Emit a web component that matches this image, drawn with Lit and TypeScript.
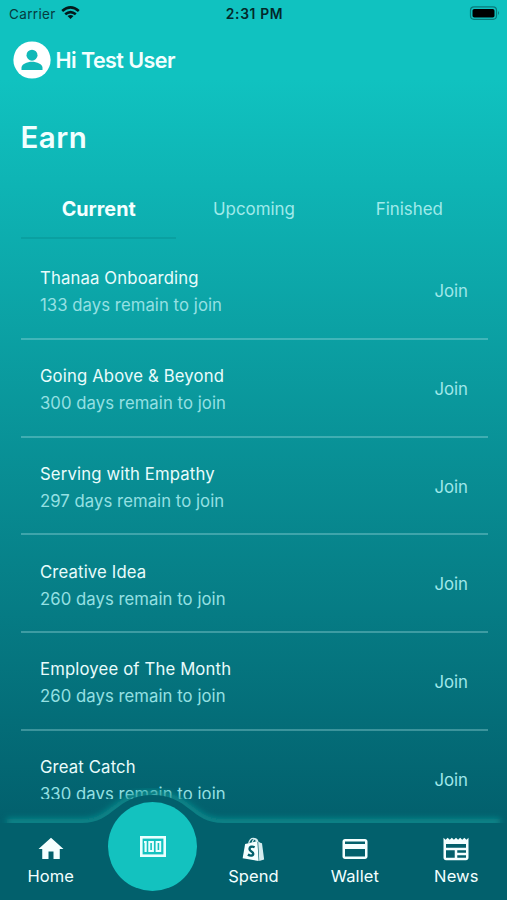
import { LitElement, html, css, svg } from "lit";
import { customElement, state } from "lit/decorators.js";
import { classMap } from "lit/directives/class-map.js";

interface Program { name: string; days: number; }

const programs: Program[] = [
  { name: "Thanaa Onboarding", days: 133 },
  { name: "Going Above & Beyond", days: 300 },
  { name: "Serving with Empathy", days: 297 },
  { name: "Creative Idea", days: 260 },
  { name: "Employee of The Month", days: 260 },
  { name: "Great Catch", days: 330 },
];

const icons = {
  home: svg`<path d="M10 20v-6h4v6h5v-8h3L12 3 2 12h3v8z"/>`,
  spend: svg`<g transform="translate(1.300 1.200)"><path d="M4.400 6.800 14.200 4.600 15.200 20.400 2.400 18.200z"/><path d="m14.800 4.700 2.200 1.300.9.200 1.700 12.900-3.900 1.200z" fill="#d5ecee"/><path d="M7.200 6.600C7.800 3.700 9.400 2.300 10.900 2.300c1.600 0 2.400 1.200 2.500 3M10.100 6c.3-2.200 1.300-3.500 2.700-3.300 1 .2 1.600 1.100 1.700 2.500" fill="none" stroke="#d5ecee" stroke-width="1"/><path d="M12 9.400C9.800 8.300 7.900 9 7.900 10.700c0 2 3 2 3 3.900 0 1.700-2.300 1.900-4.300.7" fill="none" stroke="#02606c" stroke-width="1.900"/></g>`,
  wallet: svg`<path d="M20 4H4c-1.110 0-2 .89-2 2v12c0 1.110.89 2 2 2h16c1.110 0 2-.89 2-2V6c0-1.110-.89-2-2-2zm0 14H4v-6h16v6zm0-10H4V6h16v2z"/>`,
  news: svg`<path fill-rule="evenodd" d="m22 3-1.670 1.670L18.670 3 17 4.670 15.330 3l-1.660 1.670L12 3l-1.670 1.670L8.670 3 7 4.670 5.330 3 3.670 4.670 2 3v16c0 1.100.9 2 2 2h16c1.100 0 2-.9 2-2V3zM11 19H4v-6h7v6zm9 0h-7v-2h7v2zm0-4h-7v-2h7v2zm0-4H4V8h16v3z"/>`,
};

@customElement("status-bar")
class StatusBar extends LitElement {
  static styles = css`
    :host { display: grid; grid-template-columns: 1fr auto 1fr; align-items: center; height: 28px; padding: 0 7px 0 9px; box-sizing: border-box; font-size: 13.500px; color: #063b3e; }
    .left { display: flex; align-items: center; gap: 5px; letter-spacing: 0.350px; }
    .wifi { width: 19px; height: 14px; fill: none; stroke: #04191b; margin-top: -2px; }
    .time { color: #03282a; font-weight: 600; font-size: 13.800px; letter-spacing: 0.650px; }
    .battery { justify-self: end; width: 31px; height: 14px; margin-top: -2px; }
  `;
  render() {
    return html`
      <div class="left"><span>Carrier</span>
        <svg class="wifi" viewBox="0 0 19 14"><path d="M1.200 5Q9.500-2.200 17.800 5M4.200 8.300Q9.500 3.800 14.800 8.300" stroke-width="2.600"/><path d="M9.500 13 6.500 10.100Q9.500 7.800 12.500 10.100z" fill="#04191b" stroke="none"/></svg>
      </div>
      <span class="time">2:31 PM</span>
      <svg class="battery" viewBox="0 0 31 14"><rect x="1.500" y=".9" width="26" height="12.400" rx="3.500" fill="none" stroke="#087b7b" stroke-width="1.200"/><rect x="3.500" y="2.900" width="22" height="8.600" rx="1.800" fill="#000"/><path d="M29 5q2 2 0 4z" fill="#087b7b"/></svg>
    `;
  }
}

@customElement("program-row")
class ProgramRow extends LitElement {
  static properties = { program: { attribute: false } };
  declare program: Program;
  static styles = css`
    :host { display: flex; align-items: center; justify-content: space-between; height: 97.750px; flex: none; box-sizing: border-box; padding: 2px 20px 0 19px; border-bottom: 2px solid rgba(170, 225, 230, 0.340); }
    .text { padding-top: 2.500px; }
    .name { font-size: 16.700px; line-height: 27px; color: #e9fcfc; letter-spacing: 0.150px; }
    .days { font-size: 16.700px; line-height: 27px; color: #95e0e3; letter-spacing: 0.060px; }
    .join { font-size: 16.800px; color: #9fe7e9; }
  `;
  render() {
    return html`
      <div class="text"><div class="name">${this.program.name}</div>
      <div class="days">${this.program.days} days remain to join</div></div>
      <span class="join">Join</span>`;
  }
}

@customElement("tab-bar")
class TabBar extends LitElement {
  static styles = css`
    :host { display: block; position: relative; height: 112px; flex: none; color: #f2ffff; }
    .shape { position: absolute; inset: 0; width: 507px; height: 112px; }
    .items { position: relative; display: grid; grid-template-columns: repeat(5, 1fr); height: 112px; }
    .item { display: flex; flex-direction: column; align-items: center; padding-top: 46px; font-size: 16.500px; line-height: 24px; letter-spacing: 0.100px; }
    .icon { width: 30px; height: 30px; fill: #f4ffff; margin-bottom: -0.500px; }
    .active { justify-self: center; width: 89px; height: 89px; border-radius: 50%; background: #13c2bf; margin-top: 13.500px; display: grid; place-items: center; position: relative; left: 0.500px; }
    .note { width: 26px; height: 21px; }
  `;
  item(label: string, icon: unknown) {
    return html`<div class="item"><svg class="icon" viewBox="0 0 24 24">${icon}</svg><span>${label}</span></div>`;
  }
  render() {
    const edge = "M0 35H82C114 35 116 7 152.500 7S191 35 223 35H507";
    return html`
      <svg class="shape" viewBox="0 0 507 112">
        <defs><filter id="glow" x="-5%" y="-100%" width="110%" height="300%"><feGaussianBlur stdDeviation="3"/></filter></defs>
        <path d="M7 34H82C114 34 116 6 152.500 6S191 34 223 34H500" fill="none" stroke="#0a9292" stroke-width="6" filter="url(#glow)"/>
        <path d="${edge}V112H0z" fill="#02606c"/>
      </svg>
      <div class="items">
        ${this.item("Home", icons.home)}
        <div class="active"><svg class="note" viewBox="0 0 26 21"><rect x="1.300" y="1.300" width="23.400" height="18.400" fill="none" stroke="#eaffff" stroke-width="2.600"/><path d="M5.600 5V16M4 6H6" stroke="#eaffff" stroke-width="2.200"/><rect x="9.300" y="6" width="3.600" height="9" fill="none" stroke="#eaffff" stroke-width="2"/><rect x="16.600" y="6" width="3.600" height="9" fill="none" stroke="#eaffff" stroke-width="2"/></svg></div>
        ${this.item("Spend", icons.spend)}
        ${this.item("Wallet", icons.wallet)}
        ${this.item("News", icons.news)}
      </div>`;
  }
}

@customElement("app-root")
class AppRoot extends LitElement {
  @state() private tab = "Current";
  static styles = css`
    :host { display: flex; flex-direction: column; width: 507px; height: 900px; overflow: hidden; font-family: Inter, "Liberation Sans", sans-serif; background: linear-gradient(#10c2c0 80px, #02606d 820px); }
    .user { display: flex; align-items: center; gap: 5px; height: 64px; padding-left: 12.500px; color: #f2ffff; font-size: 21.500px; font-weight: 600; letter-spacing: -0.550px; flex: none; }
    .avatar { width: 38px; height: 38px; margin-top: -1px; }
    .title { margin: 0; padding: 28px 20.500px 0; font-size: 29.500px; line-height: 35px; font-weight: 600; color: #f2ffff; letter-spacing: 0.500px; flex: none; }
    .tabs { display: grid; grid-template-columns: repeat(3, 1fr); margin: 25px 20px 0 21px; height: 59px; flex: none; }
    .tab { display: grid; place-items: center; font-size: 16.900px; color: #a0eaea; border-bottom: 2px solid transparent; }
    .current { font-size: 19.800px; font-weight: 700; color: #f5ffff; border-bottom-color: #0aa0a1; }
    .list { display: flex; flex-direction: column; height: 560px; flex: none; overflow: hidden; margin: 0 19px 0 21px; padding-top: 3.200px; box-sizing: border-box; }
    .nav { margin-top: -11px; }
  `;
  render() {
    return html`
      <status-bar></status-bar>
      <div class="user">
        <svg class="avatar" viewBox="0 0 38 38"><circle cx="19" cy="19" r="18.600" fill="#fff"/><circle cx="19" cy="14.200" r="5.500" fill="#10b9b8"/><path d="M8.500 29v-2.200c0-3.600 5.600-6 10.500-6s10.500 2.400 10.500 6V29z" fill="#10b9b8"/></svg>
        <span>Hi Test User</span>
      </div>
      <h1 class="title">Earn</h1>
      <div class="tabs">
        ${["Current", "Upcoming", "Finished"].map((t) => html`<div class=${classMap({ tab: true, current: t === this.tab })} @click=${() => (this.tab = t)}>${t}</div>`)}
      </div>
      <div class="list">${programs.map((p) => html`<program-row .program=${p}></program-row>`)}</div>
      <tab-bar class="nav"></tab-bar>
    `;
  }
}
